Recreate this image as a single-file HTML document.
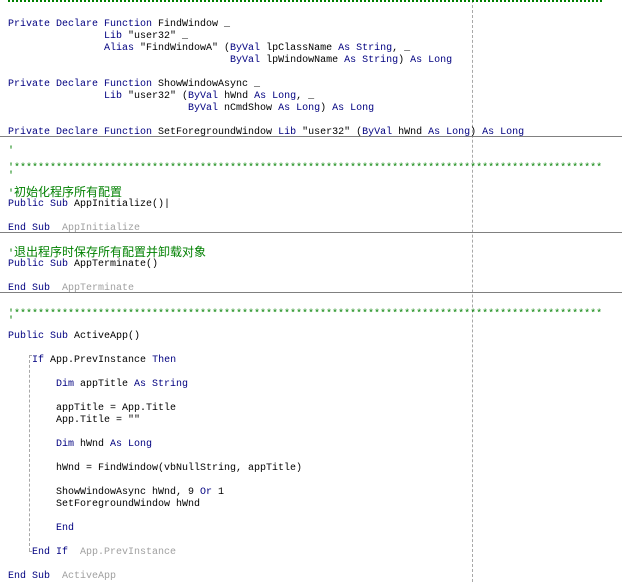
<!DOCTYPE html>
<html><head><meta charset="utf-8"><style>
html,body{margin:0;padding:0;background:#fff;width:622px;height:582px;overflow:hidden;position:relative}
.w{position:absolute;left:0;top:2px;width:622px;height:582px}
.l{position:absolute;left:8px;height:12px;line-height:12px;font-family:"Liberation Mono","Noto Sans CJK SC",monospace;font-size:10px;color:#000;white-space:pre}
.k{color:#000080}.c{color:#008000}.g{color:#a0a0a0}
.cj{font-family:"Noto Sans CJK SC",sans-serif;font-size:12px;line-height:12px}
.sep{position:absolute;left:0;width:622px;height:1px;background:#808080}
</style></head><body>
<div style="position:absolute;left:472px;top:0;height:582px;border-left:1px dashed #a8a8a8"></div>
<div style="position:absolute;left:8px;top:0;width:594px;height:2px;border-top:2px dotted #008000"></div>
<div class="w">
<div class="l" style="top:17px"><span class="k">Private Declare Function</span> FindWindow _</div>
<div class="l" style="top:29px">                <span class="k">Lib</span> "user32" _</div>
<div class="l" style="top:41px">                <span class="k">Alias</span> "FindWindowA" (<span class="k">ByVal</span> lpClassName <span class="k">As String</span>, _</div>
<div class="l" style="top:53px">                                     <span class="k">ByVal</span> lpWindowName <span class="k">As String</span>) <span class="k">As Long</span></div>
<div class="l" style="top:77px"><span class="k">Private Declare Function</span> ShowWindowAsync _</div>
<div class="l" style="top:89px">                <span class="k">Lib</span> "user32" (<span class="k">ByVal</span> hWnd <span class="k">As Long</span>, _</div>
<div class="l" style="top:101px">                              <span class="k">ByVal</span> nCmdShow <span class="k">As Long</span>) <span class="k">As Long</span></div>
<div class="l" style="top:125px"><span class="k">Private Declare Function</span> SetForegroundWindow <span class="k">Lib</span> "user32" (<span class="k">ByVal</span> hWnd <span class="k">As Long</span>) <span class="k">As Long</span></div>
<div class="sep" style="top:134px"></div>
<div class="l c" style="top:144px">'</div>
<div class="l c" style="top:161px">'**************************************************************************************************</div>
<div class="l c" style="top:169px">'</div>
<div class="l c" style="top:184px">'<span class="cj">初始化程序所有配置</span></div>
<div class="l" style="top:197px"><span class="k">Public Sub</span> AppInitialize()|</div>
<div class="l" style="top:221px"><span class="k">End Sub</span>  <span class="g">AppInitialize</span></div>
<div class="sep" style="top:230px"></div>
<div class="l c" style="top:244px">'<span class="cj">退出程序时保存所有配置并卸载对象</span></div>
<div class="l" style="top:257px"><span class="k">Public Sub</span> AppTerminate()</div>
<div class="l" style="top:281px"><span class="k">End Sub</span>  <span class="g">AppTerminate</span></div>
<div class="sep" style="top:290px"></div>
<div class="l c" style="top:307px">'**************************************************************************************************</div>
<div class="l c" style="top:314px">'</div>
<div class="l" style="top:329px"><span class="k">Public Sub</span> ActiveApp()</div>
<div style="position:absolute;left:29px;top:353px;height:196px;border-left:1px dashed #a8a8a8"></div>
<div style="position:absolute;left:29px;top:353px;width:3px;border-top:1px solid #a8a8a8"></div>
<div style="position:absolute;left:29px;top:549px;width:3px;border-top:1px solid #a8a8a8"></div>
<div class="l" style="top:353px">    <span class="k">If</span> App.PrevInstance <span class="k">Then</span></div>
<div class="l" style="top:377px">        <span class="k">Dim</span> appTitle <span class="k">As String</span></div>
<div class="l" style="top:401px">        appTitle = App.Title</div>
<div class="l" style="top:413px">        App.Title = ""</div>
<div class="l" style="top:437px">        <span class="k">Dim</span> hWnd <span class="k">As Long</span></div>
<div class="l" style="top:461px">        hWnd = FindWindow(vbNullString, appTitle)</div>
<div class="l" style="top:485px">        ShowWindowAsync hWnd, 9 <span class="k">Or</span> 1</div>
<div class="l" style="top:497px">        SetForegroundWindow hWnd</div>
<div class="l" style="top:521px">        <span class="k">End</span></div>
<div class="l" style="top:545px">    <span class="k">End If</span>  <span class="g">App.PrevInstance</span></div>
<div class="l" style="top:569px"><span class="k">End Sub</span>  <span class="g">ActiveApp</span></div>
</div>
</body></html>
